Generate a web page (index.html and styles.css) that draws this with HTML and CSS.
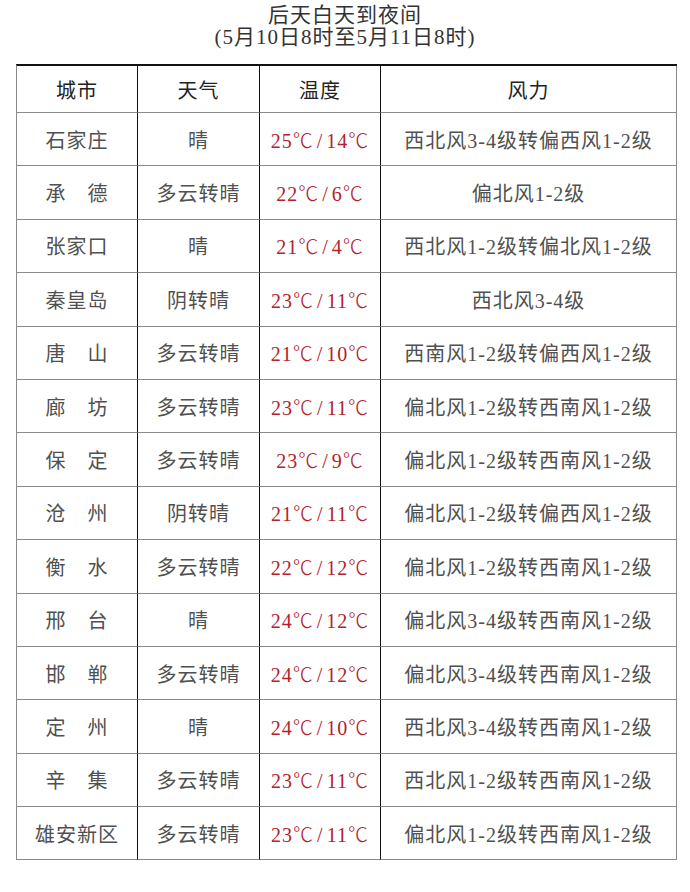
FILE: index.html
```html
<!DOCTYPE html>
<html lang="zh-CN">
<head>
<meta charset="utf-8">
<title>后天白天到夜间</title>
<link rel="stylesheet" href="styles.css">
</head>
<body>
<div class="page">
  <div class="title">
    <div class="title-line">后天白天到夜间</div>
    <div class="title-line">(5月10日8时至5月11日8时)</div>
  </div>
  <table class="forecast">
    <colgroup>
      <col class="c-city">
      <col class="c-weather">
      <col class="c-temp">
      <col class="c-wind">
    </colgroup>
    <thead>
      <tr class="head-row">
        <th>城市</th><th>天气</th><th>温度</th><th class="last">风力</th>
      </tr>
    </thead>
    <tbody>
      <tr><td>石家庄</td><td>晴</td><td class="temp">25<span class="deg">℃</span><span class="sl">/</span>14<span class="deg">℃</span></td><td class="last">西北风3-4级转偏西风1-2级</td></tr>
      <tr><td>承　德</td><td>多云转晴</td><td class="temp">22<span class="deg">℃</span><span class="sl">/</span>6<span class="deg">℃</span></td><td class="last">偏北风1-2级</td></tr>
      <tr><td>张家口</td><td>晴</td><td class="temp">21<span class="deg">℃</span><span class="sl">/</span>4<span class="deg">℃</span></td><td class="last">西北风1-2级转偏北风1-2级</td></tr>
      <tr><td>秦皇岛</td><td>阴转晴</td><td class="temp">23<span class="deg">℃</span><span class="sl">/</span>11<span class="deg">℃</span></td><td class="last">西北风3-4级</td></tr>
      <tr><td>唐　山</td><td>多云转晴</td><td class="temp">21<span class="deg">℃</span><span class="sl">/</span>10<span class="deg">℃</span></td><td class="last">西南风1-2级转偏西风1-2级</td></tr>
      <tr><td>廊　坊</td><td>多云转晴</td><td class="temp">23<span class="deg">℃</span><span class="sl">/</span>11<span class="deg">℃</span></td><td class="last">偏北风1-2级转西南风1-2级</td></tr>
      <tr><td>保　定</td><td>多云转晴</td><td class="temp">23<span class="deg">℃</span><span class="sl">/</span>9<span class="deg">℃</span></td><td class="last">偏北风1-2级转西南风1-2级</td></tr>
      <tr><td>沧　州</td><td>阴转晴</td><td class="temp">21<span class="deg">℃</span><span class="sl">/</span>11<span class="deg">℃</span></td><td class="last">偏北风1-2级转偏西风1-2级</td></tr>
      <tr><td>衡　水</td><td>多云转晴</td><td class="temp">22<span class="deg">℃</span><span class="sl">/</span>12<span class="deg">℃</span></td><td class="last">偏北风1-2级转西南风1-2级</td></tr>
      <tr><td>邢　台</td><td>晴</td><td class="temp">24<span class="deg">℃</span><span class="sl">/</span>12<span class="deg">℃</span></td><td class="last">偏北风3-4级转西南风1-2级</td></tr>
      <tr><td>邯　郸</td><td>多云转晴</td><td class="temp">24<span class="deg">℃</span><span class="sl">/</span>12<span class="deg">℃</span></td><td class="last">偏北风3-4级转西南风1-2级</td></tr>
      <tr><td>定　州</td><td>晴</td><td class="temp">24<span class="deg">℃</span><span class="sl">/</span>10<span class="deg">℃</span></td><td class="last">西北风3-4级转西南风1-2级</td></tr>
      <tr><td>辛　集</td><td>多云转晴</td><td class="temp">23<span class="deg">℃</span><span class="sl">/</span>11<span class="deg">℃</span></td><td class="last">西北风1-2级转西南风1-2级</td></tr>
      <tr><td>雄安新区</td><td>多云转晴</td><td class="temp">23<span class="deg">℃</span><span class="sl">/</span>11<span class="deg">℃</span></td><td class="last">偏北风1-2级转西南风1-2级</td></tr>
    </tbody>
  </table>
</div>
</body>
</html>
```

FILE: styles.css
```css
html, body {
  margin: 0;
  padding: 0;
  background: #ffffff;
}

body {
  font-family: "Liberation Serif", "Noto Sans CJK SC", serif;
  color: #4a4a4a;
}

.page {
  width: 690px;
  padding-top: 4px;
}

.title {
  text-align: center;
  color: #333333;
  font-size: 21px;
  line-height: 22px;
  letter-spacing: 1px;
  margin-bottom: 16px;
}

.forecast {
  margin-left: 16px;
  width: 660px;
  table-layout: fixed;
  border-collapse: separate;
  border-spacing: 0;
  border-top: 2px solid #111111;
  border-left: 1px solid #8a8a8a;
}

.c-city { width: 121px; }
.c-weather { width: 122px; }
.c-temp { width: 121px; }
.c-wind { width: 296px; }

.forecast th,
.forecast td {
  padding: 0;
  text-align: center;
  vertical-align: middle;
  font-size: 20px;
  font-weight: normal;
  letter-spacing: 1px;
  white-space: nowrap;
  border-right: 1.5px solid #111111;
  border-bottom: 1px solid #8a8a8a;
}

.forecast th.last,
.forecast td.last {
  border-right: 1px solid #8a8a8a;
}

.head-row {
  height: 47px;
}

.forecast th {
  color: #222222;
}

.forecast tbody tr {
  height: 53.4px;
}

.forecast td {
  color: #505050;
}

.forecast td.temp {
  color: #b3222c;
}

.deg {
  font-family: "Noto Sans CJK SC", sans-serif;
  font-weight: 300;
  letter-spacing: 1px;
}

.sl {
  padding: 0 3px;
}
```
